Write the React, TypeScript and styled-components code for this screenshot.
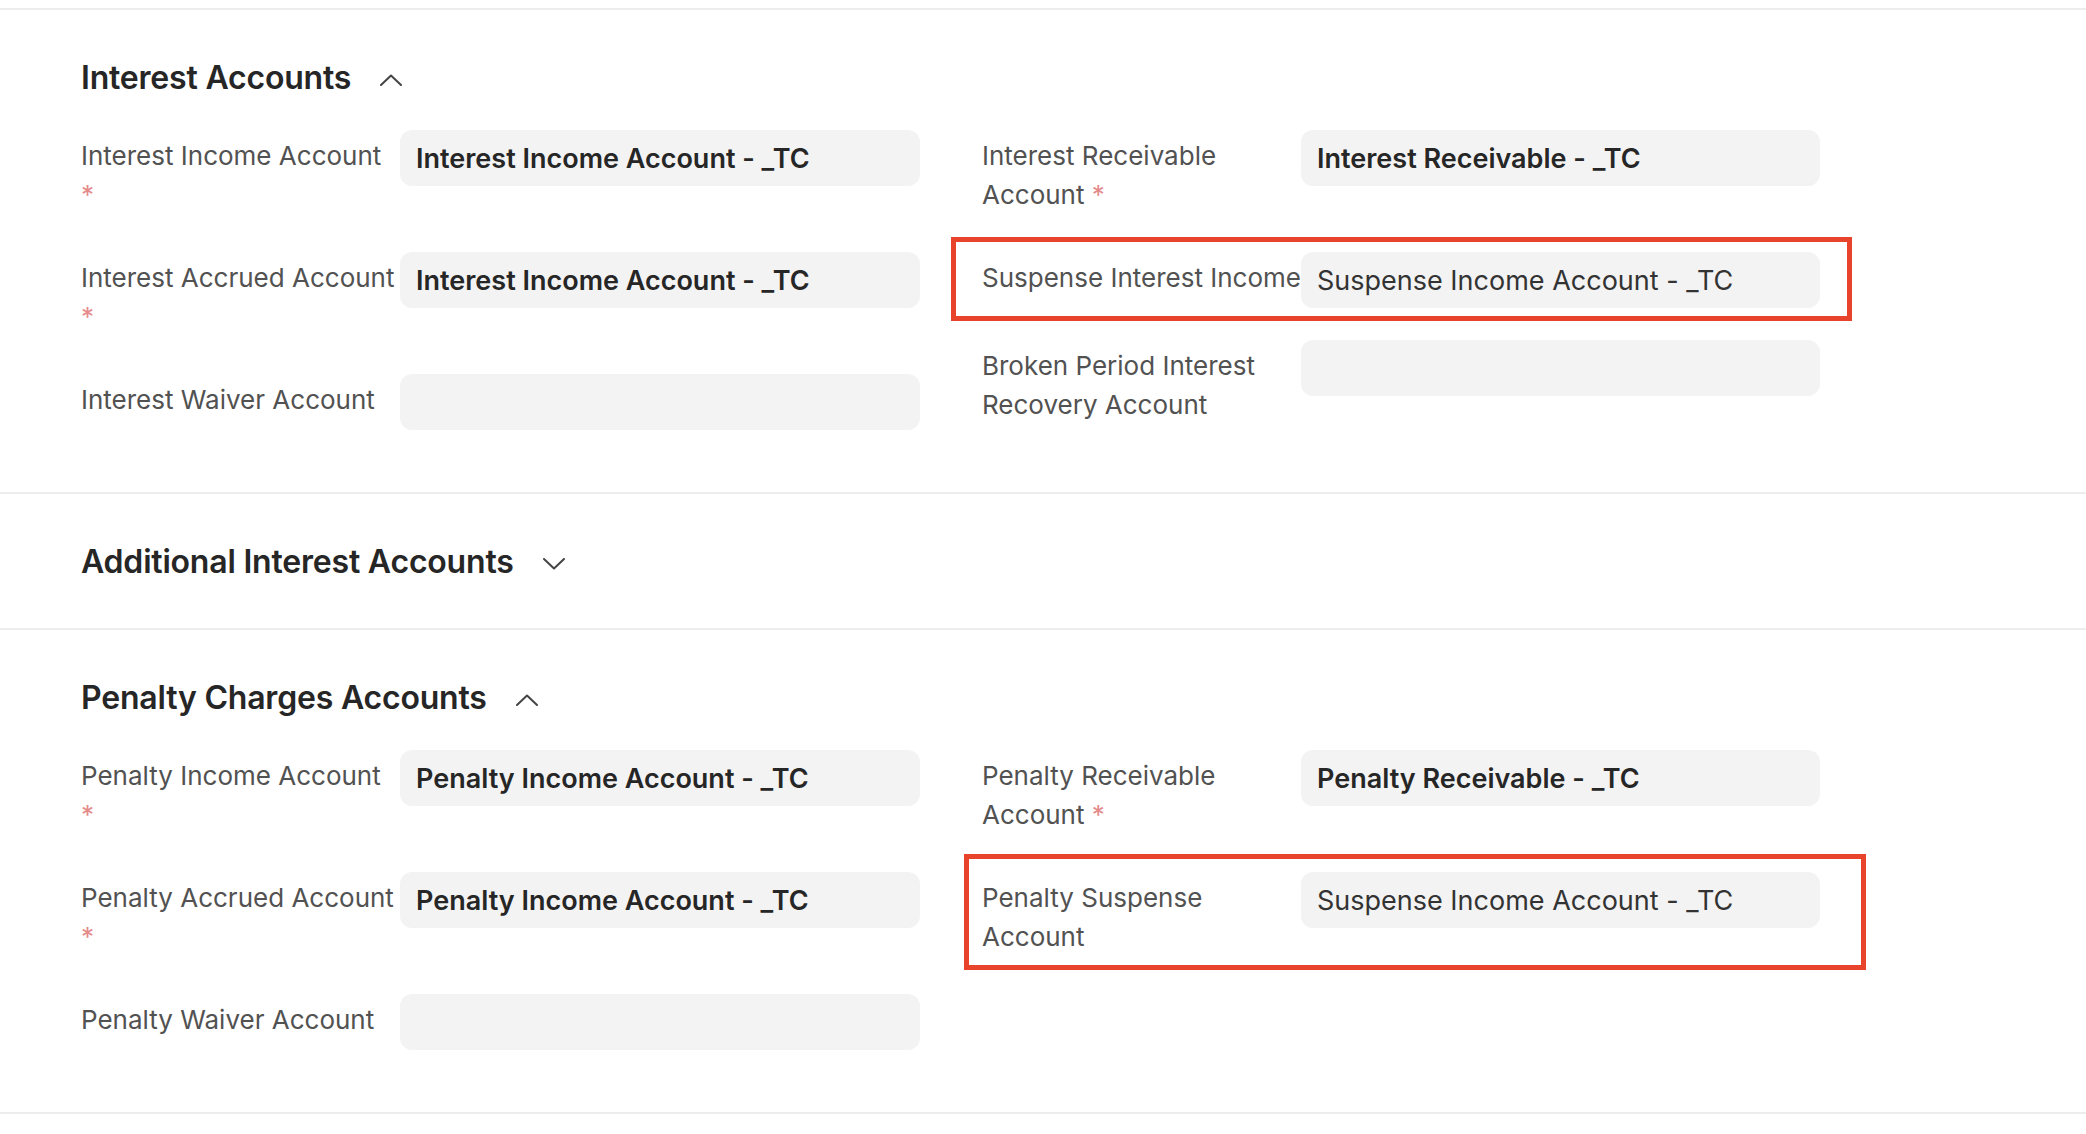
import React from "react";
import styled, { createGlobalStyle } from "styled-components";

interface FieldType {
  label: string;
  value?: string;
  required?: boolean;
  bold?: boolean;
  mark?: [number, number, number, number];
}

interface SectionType {
  title: string;
  open: boolean;
  left: FieldType[];
  right: FieldType[];
}

const GlobalStyle = createGlobalStyle`
  body {
    margin: 0;
    background: #ffffff;
    font-family: Inter, "Noto Sans", sans-serif;
    color: #1f272e;
  }
`;

const Page = styled.div`
  padding-top: 8px;
  width: 100%;
`;

const Section = styled.section<{ last?: boolean }>`
  border-top: 2px solid #ededed;
  border-bottom: ${(props) => (props.last ? "2px solid #ededed" : "none")};
  padding: 48px 0 47px 81px;
`;

const SectionHead = styled.div`
  display: flex;
  align-items: center;
  gap: 29px;
  height: 39px;
`;

const SectionTitle = styled.h3`
  margin: 0;
  font-size: 32px;
  line-height: 39px;
  font-weight: 600;
  color: #262626;
  letter-spacing: -0.2px;
`;

const Chevron = styled.svg`
  margin-top: 4px;
  flex: none;
`;

const Columns = styled.div`
  display: grid;
  grid-template-columns: 839px 838px;
  column-gap: 62px;
  margin-top: 33px;
  margin-bottom: 15px;
  align-items: start;
`;

const Column = styled.div`
  display: flex;
  flex-direction: column;
  gap: 32px;
`;

const FieldRow = styled.div<{ mark?: [number, number, number, number] }>`
  display: flex;
  align-items: flex-start;
  position: relative;

  ${(props) =>
    props.mark
      ? `&::after {
    content: "";
    position: absolute;
    top: ${props.mark[0]}px;
    right: ${props.mark[1]}px;
    bottom: ${props.mark[2]}px;
    left: ${props.mark[3]}px;
    border: 5px solid #e8442c;
    pointer-events: none;
  }`
      : ""}
`;

const Label = styled.div`
  flex: 0 0 319px;
  padding: 6px 0;
  font-size: 26px;
  line-height: 39px;
  color: #525252;
`;

const Star = styled.span`
  color: #e48a8a;
`;

const Input = styled.div<{ bold?: boolean }>`
  flex: 1;
  height: 56px;
  box-sizing: border-box;
  border-radius: 12px;
  background: #f3f3f3;
  padding: 0 16px;
  display: flex;
  align-items: center;
  font-size: 27px;
  font-weight: ${(props) => (props.bold ? 600 : 400)};
  color: ${(props) => (props.bold ? "#262626" : "#333333")};
  white-space: nowrap;
`;

const sections: SectionType[] = [
  {
    title: "Interest Accounts",
    open: true,
    left: [
      { label: "Interest Income Account", required: true, value: "Interest Income Account - _TC", bold: true },
      { label: "Interest Accrued Account", required: true, value: "Interest Income Account - _TC", bold: true },
      { label: "Interest Waiver Account" },
    ],
    right: [
      { label: "Interest Receivable Account", required: true, value: "Interest Receivable - _TC", bold: true },
      { label: "Suspense Interest Income", value: "Suspense Income Account - _TC", mark: [-15, -32, -13, -31] },
      { label: "Broken Period Interest Recovery Account" },
    ],
  },
  {
    title: "Additional Interest Accounts",
    open: false,
    left: [],
    right: [],
  },
  {
    title: "Penalty Charges Accounts",
    open: true,
    left: [
      { label: "Penalty Income Account", required: true, value: "Penalty Income Account - _TC", bold: true },
      { label: "Penalty Accrued Account", required: true, value: "Penalty Income Account - _TC", bold: true },
      { label: "Penalty Waiver Account" },
    ],
    right: [
      { label: "Penalty Receivable Account", required: true, value: "Penalty Receivable - _TC", bold: true },
      { label: "Penalty Suspense Account", value: "Suspense Income Account - _TC", mark: [-18, -46, -8, -18] },
    ],
  },
];

const Field: React.FC<FieldType> = (props) => (
  <FieldRow mark={props.mark}>
    <Label>
      {props.label}
      {props.required && (
        <>
          {" "}
          <Star>*</Star>
        </>
      )}
    </Label>
    <Input bold={props.bold}>{props.value}</Input>
  </FieldRow>
);

const App: React.FC = () => {
  return (
    <>
      <GlobalStyle />
      <Page>
        {sections.map((s, i) => (
          <Section key={s.title} last={i === sections.length - 1}>
            <SectionHead>
              <SectionTitle>{s.title}</SectionTitle>
              <Chevron width="22" height="12" viewBox="0 0 22 12" fill="none">
                <polyline
                  points={s.open ? "1,11 11,1.5 21,11" : "1,1 11,10.5 21,1"}
                  stroke="#444"
                  strokeWidth="2"
                  strokeLinecap="round"
                  strokeLinejoin="round"
                />
              </Chevron>
            </SectionHead>
            {s.open && (
              <Columns>
                <Column>
                  {s.left.map((f, j) => (
                    <Field key={j} {...f} />
                  ))}
                </Column>
                <Column>
                  {s.right.map((f, j) => (
                    <Field key={j} {...f} />
                  ))}
                </Column>
              </Columns>
            )}
          </Section>
        ))}
      </Page>
    </>
  );
};

export default App;
